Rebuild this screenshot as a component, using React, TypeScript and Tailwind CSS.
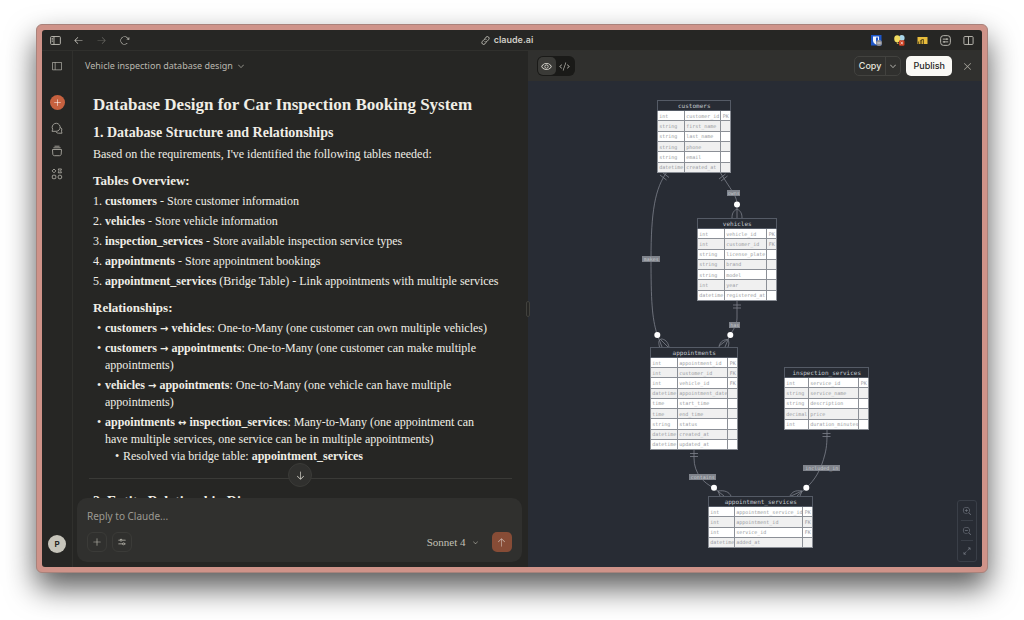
import type { ReactNode } from "react";
import {
  PiArrowClockwise,
  PiArrowDown,
  PiArrowLeft,
  PiArrowRight,
  PiArrowsOutSimple,
  PiArrowUp,
  PiCaretDown,
  PiCode,
  PiEye,
  PiMagnifyingGlassMinus,
  PiMagnifyingGlassPlus,
  PiPlus,
  PiSidebarSimple,
  PiSlidersHorizontal,
  PiX,
} from "react-icons/pi";

type Field = [type: string, name: string, key?: string];

interface Entity {
  name: string;
  place: string;
  typeCol: string;
  fields: Field[];
}

const entities: Entity[] = [
  {
    name: "customers",
    place: "left-[16px] top-px w-[74px] h-[73px]",
    typeCol: "w-[27px]",
    fields: [
      ["int", "customer_id", "PK"],
      ["string", "first_name"],
      ["string", "last_name"],
      ["string", "phone"],
      ["string", "email"],
      ["datetime", "created_at"],
    ],
  },
  {
    name: "vehicles",
    place: "left-[56px] top-[119px] w-[80px] h-[83px]",
    typeCol: "w-[27px]",
    fields: [
      ["int", "vehicle_id", "PK"],
      ["int", "customer_id", "FK"],
      ["string", "license_plate"],
      ["string", "brand"],
      ["string", "model"],
      ["int", "year"],
      ["datetime", "registered_at"],
    ],
  },
  {
    name: "appointments",
    place: "left-[9px] top-[248px] w-[88px] h-[103px]",
    typeCol: "w-[27px]",
    fields: [
      ["int", "appointment_id", "PK"],
      ["int", "customer_id", "FK"],
      ["int", "vehicle_id", "FK"],
      ["datetime", "appointment_date"],
      ["time", "start_time"],
      ["time", "end_time"],
      ["string", "status"],
      ["datetime", "created_at"],
      ["datetime", "updated_at"],
    ],
  },
  {
    name: "inspection_services",
    place: "left-[143px] top-[268px] w-[85px] h-[63px]",
    typeCol: "w-[24px]",
    fields: [
      ["int", "service_id", "PK"],
      ["string", "service_name"],
      ["string", "description"],
      ["decimal", "price"],
      ["int", "duration_minutes"],
    ],
  },
  {
    name: "appointment_services",
    place: "left-[67px] top-[397px] w-[105px] h-[52px]",
    typeCol: "w-[26px]",
    fields: [
      ["int", "appointment_service_id", "PK"],
      ["int", "appointment_id", "FK"],
      ["int", "service_id", "FK"],
      ["datetime", "added_at"],
    ],
  },
];

const edgeLabels = [
  { text: "owns", place: "left-[86px] top-[91px] w-[13px]" },
  { text: "makes", place: "left-[1px] top-[157px] w-[18px]" },
  { text: "has", place: "left-[88px] top-[223px] w-[11px]" },
  { text: "contains", place: "left-[48px] top-[375px] w-[27px]" },
  { text: "included_in", place: "left-[162px] top-[366px] w-[37px]" },
];

function EntityTable({ entity }: { entity: Entity }) {
  return (
    <table
      className={`absolute table-fixed border-collapse border border-[#7b8088] font-['DejaVu_Sans_Mono',monospace] text-[5px] leading-[6px] ${entity.place}`}
    >
      <colgroup>
        <col className={entity.typeCol} />
        <col />
        <col className="w-[10px]" />
      </colgroup>
      <thead>
        <tr>
          <th
            colSpan={3}
            className="h-[10px] border border-[#555b66] bg-[#282c34] p-0 text-center text-[6px] font-normal text-[#c3c7ce]"
          >
            {entity.name}
          </th>
        </tr>
      </thead>
      <tbody>
        {entity.fields.map(([type, name, key]) => (
          <tr key={name} className="bg-white even:bg-[#f0f0f0]">
            <td className="border border-[#8b8f96] p-0 pl-px whitespace-nowrap text-[#989ba0]">{type}</td>
            <td className="border border-[#8b8f96] p-0 pl-px whitespace-nowrap text-[#989ba0]">{name}</td>
            <td className="border border-[#8b8f96] p-0 text-center text-[#989ba0]">{key}</td>
          </tr>
        ))}
      </tbody>
    </table>
  );
}

function Edges() {
  return (
    <svg
      viewBox="641 99 229 450"
      className="absolute inset-0 h-full w-full"
      fill="none"
      stroke="#7d828b"
      strokeWidth="0.8"
      aria-hidden="true"
    >
      <path d="M667 172C655 188 651 212 651 259C651 300 652 318 657 334L662 347" />
      <path d="M660 175l6.500 5M662.500 172.500l6.500 5" />
      <path d="M661 339C657.500 341 659 344 659.500 347M660.500 339.500L668 347M661 339C665 339 668 342 669 347" />
      <path d="M720 172C726 182 731 189 734 194C736 198 737 201 737 204V218" />
      <path d="M719 179l6.500-5M721 181l6.500-5" />
      <path d="M737 209C733 211 732 214 732 218M737 209C741 211 742 214 742 218" />
      <path d="M737 300V318C737 325 733 330 730 335L725 347" />
      <path d="M733 305h8M733 308h8" />
      <path d="M727 339.500C722 340 719.500 343 719 347M727.500 339.500L719 346M727.500 339C729.500 342 729 344 728 347" />
      <path d="M694 450V458C694 474 704 483 714 488L724 496" />
      <path d="M690 453.500h8M690 456.500h8" />
      <path d="M718 491C725 490 729 492 731 496M718 491L720 496" />
      <path d="M827 430C827 440 827 446 825 454C821 470 815 480 806 488L797 496" />
      <path d="M822.500 433.500h8M822.500 436.500h8" />
      <path d="M802 491C795 490 792 492 790 496M802 491L791 496M802 491L800 496" />
      <g fill="#fff" stroke="none">
        <circle cx="737" cy="204.500" r="3" />
        <circle cx="657.300" cy="335" r="3" />
        <circle cx="730.300" cy="335" r="3" />
        <circle cx="714" cy="487.700" r="3" />
        <circle cx="806.300" cy="487.700" r="3" />
      </g>
    </svg>
  );
}

function Diagram() {
  return (
    <div className="relative h-[450px] w-[229px] shrink-0">
      <Edges />
      {entities.map((entity) => (
        <EntityTable key={entity.name} entity={entity} />
      ))}
      {edgeLabels.map((label) => (
        <span
          key={label.text}
          className={`absolute flex h-[6px] justify-center bg-[#80848c] font-['DejaVu_Sans_Mono',monospace] text-[5px] leading-[6px] text-[#c4c7cb] ${label.place}`}
        >
          {label.text}
        </span>
      ))}
    </div>
  );
}

function IconButton({ label, className = "", children }: { label: string; className?: string; children: ReactNode }) {
  return (
    <button type="button" aria-label={label} className={`flex shrink-0 items-center justify-center ${className}`}>
      {children}
    </button>
  );
}

function TitleBar() {
  return (
    <header className="grid h-[21px] shrink-0 grid-cols-[1fr_auto_1fr] items-center border-b border-[#30302d] px-2 text-[#c4c2ba]">
      <div className="flex items-center gap-3">
        <IconButton label="Toggle browser sidebar" className="size-[11px]">
          <svg viewBox="0 0 12 10" className="h-[9px] w-[11px]" fill="none" stroke="currentColor" aria-hidden="true">
            <rect x=".6" y=".6" width="10.800" height="8.800" rx="1" />
            <path d="M4.300 .6v8.800M1.800 2.700h1.300M1.800 4.300h1.300M1.800 5.900h1.300" />
          </svg>
        </IconButton>
        <IconButton label="Back" className="size-[11px]">
          <PiArrowLeft size={11} />
        </IconButton>
        <IconButton label="Forward" className="size-[11px] text-[#65645f]">
          <PiArrowRight size={11} />
        </IconButton>
        <IconButton label="Reload" className="size-[11px]">
          <PiArrowClockwise size={11} />
        </IconButton>
      </div>
      <a
        href="#claude"
        className="mr-2.5 flex items-center gap-1 font-['Inter',sans-serif] text-[9px] leading-3 font-semibold text-[#cfcdc5]"
      >
        <svg viewBox="0 0 12 12" className="size-[9px]" fill="none" stroke="currentColor" strokeWidth="1.1" aria-hidden="true">
          <path d="M5.200 3.200l1.500-1.600a2.300 2.300 0 0 1 3.600 3L8 7.300a2.300 2.300 0 0 1-3.300 0" />
          <path d="M6.800 8.800l-1.500 1.600a2.300 2.300 0 0 1-3.600-3L4 4.700a2.300 2.300 0 0 1 3.300 0" />
        </svg>
        claude.ai
      </a>
      <div className="flex items-center justify-end gap-3">
        <IconButton label="Password manager" className="size-[11px]">
          <svg viewBox="0 0 11 11" className="size-[11px]" aria-hidden="true">
            <rect width="10.500" height="10.500" fill="#1d56c8" />
            <path d="M2 1.500h6v4c0 2-1.500 3-3 4-1.500-1-3-2-3-4z" fill="#f4f6fb" />
            <path d="M5 2.500h2v3c0 1-1 2-2 2.700z" fill="#1d56c8" />
            <circle cx="8" cy="8" r="3" fill="#8f9097" />
            <path d="M6.300 8h3.400" stroke="#dcdce0" />
          </svg>
        </IconButton>
        <IconButton label="Balloons" className="size-[11px]">
          <svg viewBox="0 0 11 11" className="size-[11px]" aria-hidden="true">
            <ellipse cx="7.800" cy="3" rx="2.800" ry="3" fill="#a9d7ea" />
            <ellipse cx="3.200" cy="3.800" rx="3" ry="3.500" fill="#f1dc60" />
            <path d="M2.500 7.300h1.500l.7 1.700H3z" fill="#c9a944" />
            <rect x="5" y="5.200" width="5.500" height="5.500" rx="1.200" fill="#cf4123" />
            <path d="M6.600 6.900l2.300 2.200M8.900 6.900L6.600 9.100" stroke="#fff" strokeWidth=".7" />
          </svg>
        </IconButton>
        <IconButton label="Yellow extension" className="size-[11px]">
          <svg viewBox="0 0 11 11" className="size-[11px]" aria-hidden="true">
            <rect x=".5" y="2" width="10" height="7" fill="#e9bd3c" />
            <path d="M1.500 9V6.500M3.300 9V5.500h1.400V9M4.700 6V4.500h1.800V9" stroke="#4a3c14" strokeWidth=".8" fill="none" />
          </svg>
        </IconButton>
        <IconButton label="Page controls" className="size-[11px]">
          <svg viewBox="0 0 12 12" className="size-[11px]" fill="none" stroke="currentColor" aria-hidden="true">
            <rect x=".7" y=".7" width="10.600" height="10.600" rx="3" />
            <path d="M3 4.500h6M3 7.500h6M7.500 3.500v2M4.500 6.500v2" />
          </svg>
        </IconButton>
        <IconButton label="Split view" className="size-[11px]">
          <svg viewBox="0 0 12 10" className="h-[9px] w-[11px]" fill="none" stroke="currentColor" aria-hidden="true">
            <rect x=".9" y=".6" width="10.200" height="8.800" rx="1" />
            <path d="M6 .6v8.800" />
          </svg>
        </IconButton>
      </div>
    </header>
  );
}

function Sidebar() {
  return (
    <nav
      aria-label="Main"
      className="flex w-[31px] shrink-0 flex-col items-center border-r border-[#30302d] pt-[9px] pb-[14px] text-[#a9a79f]"
    >
      <IconButton label="Open sidebar" className="size-3">
        <PiSidebarSimple size={12} />
      </IconButton>
      <IconButton label="New chat" className="mt-[23px] size-[15px] rounded-full bg-[#c6613f] text-white">
        <PiPlus size={9} />
      </IconButton>
      <div className="mt-3 flex flex-col gap-[11px]">
        <IconButton label="Chats" className="size-3">
          <svg viewBox="0 0 12 12" className="size-3" fill="none" stroke="currentColor" strokeWidth=".9" aria-hidden="true">
            <path d="M1 9.300l.7-2A4 4 0 1 1 5.200 9.300z" />
            <path d="M9.300 5.200a3 3 0 0 1 1.200 4l.5 2H7.500c-1 0-1.800-.4-2.400-1.200" />
          </svg>
        </IconButton>
        <IconButton label="Projects" className="size-3">
          <svg viewBox="0 0 12 12" className="size-3" fill="none" stroke="currentColor" strokeWidth=".9" aria-hidden="true">
            <path d="M3.500 1.200h5M2.400 2.800h7.200" />
            <path d="M1.500 4.500h9l-.3 4.600c-.1 1-.7 1.600-1.600 1.600H3.400c-.9 0-1.500-.6-1.600-1.600z" />
          </svg>
        </IconButton>
        <IconButton label="Artifacts" className="size-3">
          <svg viewBox="0 0 12 12" className="size-3" fill="none" stroke="currentColor" strokeWidth=".9" aria-hidden="true">
            <path d="M3 1l1.900 1.900L3 4.800 1.100 2.900z" />
            <path d="M7.200 1h3.300L9.600 2.900l.9 1.900H7.200l.9-1.900z" />
            <rect x="1.300" y="7.200" width="3.500" height="3.500" rx=".8" />
            <circle cx="8.900" cy="9" r="1.900" />
          </svg>
        </IconButton>
      </div>
      <button
        type="button"
        aria-label="Account"
        className="mt-auto flex size-[18px] items-center justify-center rounded-full bg-[#c6c4ba] font-['Inter',sans-serif] text-[8px] leading-none font-bold text-[#262624]"
      >
        P
      </button>
    </nav>
  );
}

function Arrow({ children }: { children: string }) {
  return <span className="font-['DejaVu_Sans',sans-serif] text-[10px]">{children}</span>;
}

function Bullet({ children }: { children: ReactNode }) {
  return <li className="before:-ml-2 before:inline-block before:w-2 before:content-['•']">{children}</li>;
}

function Conversation() {
  return (
    <article className="pt-3 pr-6 pb-6 pl-5 font-['Liberation_Serif',serif] text-[12px] leading-[17px] text-[#f0eee6]">
      <h1 className="text-[17px] leading-6 font-bold">Database Design for Car Inspection Booking System</h1>
      <h2 className="mt-1.5 text-[14px] leading-5 font-bold">1. Database Structure and Relationships</h2>
      <p className="mt-[3px]">Based on the requirements, I've identified the following tables needed:</p>

      <h3 className="mt-[9px] text-[13px] leading-[18px] font-bold">Tables Overview:</h3>
      <ol className="mt-[3px] flex list-decimal flex-col gap-[3px] pl-3">
        <li>
          <strong>customers</strong> - Store customer information
        </li>
        <li>
          <strong>vehicles</strong> - Store vehicle information
        </li>
        <li>
          <strong>inspection_services</strong> - Store available inspection service types
        </li>
        <li>
          <strong>appointments</strong> - Store appointment bookings
        </li>
        <li>
          <strong>appointment_services</strong> (Bridge Table) - Link appointments with multiple services
        </li>
      </ol>

      <h3 className="mt-[9px] text-[13px] leading-[18px] font-bold">Relationships:</h3>
      <ul className="mt-[3px] flex list-none flex-col gap-[3px] pr-2 pl-3">
        <Bullet>
          <strong>
            customers <Arrow>→</Arrow> vehicles
          </strong>
          : One-to-Many (one customer can own multiple vehicles)
        </Bullet>
        <Bullet>
          <strong>
            customers <Arrow>→</Arrow> appointments
          </strong>
          : One-to-Many (one customer can make multiple appointments)
        </Bullet>
        <Bullet>
          <strong>
            vehicles <Arrow>→</Arrow> appointments
          </strong>
          : One-to-Many (one vehicle can have multiple appointments)
        </Bullet>
        <Bullet>
          <strong>
            appointments <Arrow>↔</Arrow> inspection_services
          </strong>
          : Many-to-Many (one appointment can have multiple services, one service can be in multiple appointments)
          <ul className="list-none pl-[18px]">
            <Bullet>
              Resolved via bridge table: <strong>appointment_services</strong>
            </Bullet>
          </ul>
        </Bullet>
      </ul>

      <hr className="-mr-2 -ml-1 mt-[13px] border-[#3a3a37]" />
      <h2 className="mt-[13px] text-[14px] leading-5 font-bold">2. Entity Relationship Diagram</h2>
    </article>
  );
}

function Composer() {
  return (
    <form
      className="mr-1.5 mb-[5px] ml-1 flex shrink-0 flex-col rounded-[10px] bg-[#30302e] px-2.5 pt-2.5 pb-[10px]"
      onSubmit={(event) => event.preventDefault()}
    >
      <input
        type="text"
        aria-label="Reply to Claude"
        placeholder="Reply to Claude..."
        className="h-4 w-full bg-transparent font-['Noto_Sans',sans-serif] text-[10px] leading-4 text-[#f0eee6] outline-none placeholder:text-[#9c9a92]"
      />
      <div className="mt-2 flex items-center gap-[5px] text-[#c2c0b6]">
        <IconButton label="Add content" className="size-5 rounded-md border border-[#3b3b38]">
          <PiPlus size={10} />
        </IconButton>
        <IconButton label="Search and tools" className="size-5 rounded-md border border-[#3b3b38]">
          <PiSlidersHorizontal size={10} />
        </IconButton>
        <button
          type="button"
          className="ml-auto flex items-center gap-1.5 font-['Liberation_Serif',serif] text-[11px] leading-4"
        >
          Sonnet 4
          <PiCaretDown size={7} />
        </button>
        <IconButton label="Send message" className="ml-2 size-5 rounded-[5px] bg-[#874c36] text-[#c9b3a9]">
          <PiArrowUp size={11} />
        </IconButton>
      </div>
    </form>
  );
}

function ChatPanel() {
  return (
    <main className="flex min-w-0 flex-1 flex-col">
      <div className="flex h-[30px] shrink-0 items-center px-3">
        <button
          type="button"
          className="flex items-center gap-1 font-['Noto_Sans',sans-serif] text-[9px] leading-4 text-[#bab8af]"
        >
          Vehicle inspection database design
          <PiCaretDown size={8} />
        </button>
      </div>
      <div className="relative flex min-h-0 flex-1 flex-col">
        <div className="min-h-0 flex-1 overflow-y-auto [scrollbar-width:none]">
          <Conversation />
        </div>
        <IconButton
          label="Scroll to bottom"
          className="absolute bottom-[11px] left-1/2 size-6 -translate-x-1/2 rounded-full border border-[#3b3b38] bg-[#30302e] text-[#d6d4cb]"
        >
          <PiArrowDown size={11} />
        </IconButton>
      </div>
      <Composer />
    </main>
  );
}

function ArtifactPanel() {
  return (
    <section aria-label="Artifact" className="relative flex min-w-0 flex-1 flex-col">
      <div className="absolute top-1/2 left-0 z-10 h-4 w-1 -translate-x-1/2 -translate-y-1/2 rounded-full border border-[#41413d] bg-[#262624]" />
      <div className="flex h-[30px] shrink-0 items-center bg-[#30302e] px-[9px] font-['Inter',sans-serif] text-[9px] leading-3 font-medium text-[#e6e4dc]">
        <div className="flex rounded-md bg-[#1a1a18] p-px">
          <IconButton label="Preview" className="size-[18px] rounded-[5px] bg-[#3a3a37]">
            <PiEye size={11} />
          </IconButton>
          <IconButton label="Code" className="size-[18px] text-[#b5b3ab]">
            <PiCode size={11} />
          </IconButton>
        </div>
        <div className="ml-auto flex h-5 items-stretch rounded-[5px] border border-[#42423f]">
          <button type="button" className="px-1">
            Copy
          </button>
          <IconButton label="More copy options" className="w-[15px] border-l border-[#42423f]">
            <PiCaretDown size={8} />
          </IconButton>
        </div>
        <button type="button" className="ml-[5px] h-5 rounded-[5px] bg-[#faf9f5] px-[7px] text-[#262624]">
          Publish
        </button>
        <IconButton label="Close artifact" className="ml-[9px] size-3 text-[#a9a79f]">
          <PiX size={11} />
        </IconButton>
      </div>
      <div className="relative flex min-h-0 flex-1 justify-center overflow-hidden bg-[#282c34] pt-[18px] pl-0.5">
        <Diagram />
        <div className="absolute right-[5px] bottom-[5px] flex w-5 flex-col divide-y divide-[#3a3f48] rounded-[3px] border border-[#3a3f48] px-[3px] text-[#727781]">
          <IconButton label="Zoom in" className="h-5">
            <PiMagnifyingGlassPlus size={10} />
          </IconButton>
          <IconButton label="Zoom out" className="h-5">
            <PiMagnifyingGlassMinus size={10} />
          </IconButton>
          <IconButton label="Fit to view" className="h-5">
            <PiArrowsOutSimple size={10} />
          </IconButton>
        </div>
      </div>
    </section>
  );
}

export default function App() {
  return (
    <div className="flex h-screen flex-col bg-white px-9 pt-6 pb-[47px]">
      <div className="flex min-h-0 flex-1 flex-col rounded-[6px] border border-[#a8827b] bg-[#cf9389] p-[5px] shadow-[0_15px_30px_rgba(0,0,0,0.65)]">
        <div className="flex min-h-0 flex-1 flex-col overflow-hidden rounded-[3px] bg-[#262624]">
          <TitleBar />
          <div className="flex min-h-0 flex-1">
            <Sidebar />
            <ChatPanel />
            <ArtifactPanel />
          </div>
        </div>
      </div>
    </div>
  );
}
